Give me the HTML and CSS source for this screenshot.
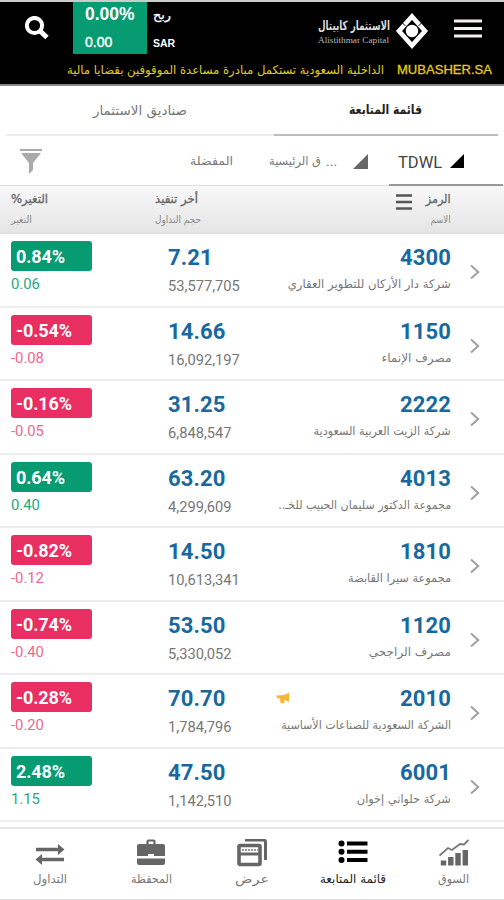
FILE: index.html
```html
<!DOCTYPE html>
<html lang="ar">
<head>
<meta charset="utf-8">
<title>قائمة المتابعة</title>
<link rel="stylesheet" href="styles.css">
</head>
<body>
<header class="top">
  <div class="bar">
    <svg class="search" width="24" height="24" viewBox="0 0 24 24"><circle cx="9.500" cy="9.500" r="7.600" fill="none" stroke="#fff" stroke-width="4"/><path d="M15 15l7 6.500" stroke="#fff" stroke-width="5"/></svg>
    <div class="gain"><b>0.00%</b><span>0.00</span></div>
    <div class="unit"><span class="ar">ربح</span><b>SAR</b></div>
    <div class="brand"><span class="ar">الاستثمار كابيتال</span><small>Alistithmar Capital</small></div>
    <svg class="logo" width="34" height="38" viewBox="0 0 34 38"><path d="M17 4.500l13 14.500L17 33.500 4 19z" fill="none" stroke="#fff" stroke-width="4.600"/><path d="M7 10.500l3.500 3.500M27 10.500l-3.500 3.500" stroke="#000" stroke-width="1"/><circle cx="17" cy="19" r="6.200" fill="#fff"/></svg>
    <svg class="burger" width="28" height="20" viewBox="0 0 28 20"><path d="M0 2h28M0 9.500h28M0 17h28" stroke="#f4eeee" stroke-width="3"/></svg>
  </div>
  <div class="ticker"><span class="ar news">الداخلية السعودية تستكمل مبادرة مساعدة الموقوفين بقضايا مالية</span><span class="src">MUBASHER.SA</span></div>
</header>
<nav class="tabs">
  <div class="tab"><span class="ar t1">صناديق الاستثمار</span></div>
  <div class="tab on"><span class="ar t2">قائمة المتابعة</span></div>
</nav>
<div class="filters">
  <svg class="funnel" width="22" height="25" viewBox="0 0 22 25"><path d="M0 1h22" stroke="#aaa" stroke-width="2"/><path d="M1 4h20l-8 10v7l-4 4V14z" fill="#aaa"/></svg>
  <span class="ar fav">المفضلة</span>
  <div class="market"><span class="ar" dir="rtl">ق الرئيسية</span><span class="dots">...</span><svg width="15" height="15" viewBox="0 0 15 15"><path d="M15 0v15H0z" fill="#666"/></svg></div>
  <div class="exch">TDWL<svg width="14" height="14" viewBox="0 0 14 14"><path d="M14 0v14H0z"/></svg></div>
</div>
<div class="head">
  <div class="hchange"><span class="ar h" dir="rtl">التغير%</span><span class="ar s">التغير</span></div>
  <div class="hprice"><span class="ar h">أخر تنفيذ</span><span class="ar s">حجم التداول</span></div>
  <svg class="sort" width="16" height="16" viewBox="0 0 16 16"><path d="M0 1.500h16M0 8h16M0 14.500h16" stroke="#555" stroke-width="2.600"/></svg>
  <div class="hname"><span class="ar h">الرمز</span><span class="ar s">الاسم</span></div>
</div>
<main id="list"></main>
<nav class="bottom">
  <div class="item"><svg width="30" height="28" viewBox="0 0 30 28"><path d="M1 10.500h23M6 20.500h23" stroke="#666" stroke-width="3.400"/><path d="M23 5l6.500 5.500-6.500 5.500zM7 15L.5 20.500 7 26z" fill="#666"/></svg><span class="ar">التداول</span></div>
  <div class="item"><svg width="30" height="28" viewBox="0 0 30 28"><path d="M11.500 6V2.500q0-1 1-1h5q1 0 1 1V6" fill="none" stroke="#666" stroke-width="2.200"/><path d="M3 5h24q2 0 2 2v10H18v-2h-6v2H1V7q0-2 2-2zM1 19.500h28V24q0 2-2 2H3q-2 0-2-2z" fill="#666"/></svg><span class="ar">المحفظة</span></div>
  <div class="item"><svg width="30" height="28" viewBox="0 0 30 28"><path d="M8 1h18.500q2 0 2 2v18" fill="none" stroke="#666" stroke-width="3"/><rect x="2" y="6.500" width="21" height="19" rx="1" fill="#fff" stroke="#666" stroke-width="3.600"/><path d="M2 15h21" stroke="#666" stroke-width="3"/><path d="M5 11h16" stroke="#999" stroke-width="2" stroke-dasharray="2 1"/></svg><span class="ar">عرض</span></div>
  <div class="item on"><svg width="30" height="28" viewBox="0 0 30 28"><path d="M9 4.500h20.500M9 12.800h20.500M9 21h20.500" stroke="#000" stroke-width="4"/><g><circle cx="3.500" cy="4.500" r="3"/><circle cx="3.500" cy="12.800" r="3"/><circle cx="3.500" cy="21" r="3"/></g></svg><span class="ar">قائمة المتابعة</span></div>
  <div class="item"><svg width="30" height="28" viewBox="0 0 30 28"><path d="M.5 16.500L9 9l4 2 8-6 4 .5 4.500-4.500" fill="none" stroke="#777" stroke-width="1.800"/><path d="M4.500 26.500v-5M11.800 26.500v-8.500M19 26.500V14M26.300 26.500V11" stroke="#666" stroke-width="5.400"/></svg><span class="ar">السوق</span></div>
</nav>
<script src="app.js"></script>
</body>
</html>
```

FILE: app.js
```
const rows = [
  ["0.84%", "0.06", "7.21", "53,577,705", "4300", "شركة دار الأركان للتطوير العقاري", 163],
  ["-0.54%", "-0.08", "14.66", "16,092,197", "1150", "مصرف الإنماء", 70],
  ["-0.16%", "-0.05", "31.25", "6,848,547", "2222", "شركة الزيت العربية السعودية", 137],
  ["0.64%", "0.40", "63.20", "4,299,609", "4013", "مجموعة الدكتور سليمان الحبيب للخـ..", 173],
  ["-0.82%", "-0.12", "14.50", "10,613,341", "1810", "مجموعة سيرا القابضة", 103],
  ["-0.74%", "-0.40", "53.50", "5,330,052", "1120", "مصرف الراجحي", 82],
  ["-0.28%", "-0.20", "70.70", "1,784,796", "2010", "الشركة السعودية للصناعات الأساسية", 170],
  ["2.48%", "1.15", "47.50", "1,142,510", "6001", "شركة حلواني إخوان", 94]
];
const horn = '<svg class="horn" width="14" height="12" viewBox="0 0 14 12"><path d="M13 .5V10L8.500 8l-.5 3.500L4.500 11l-.5-4L.5 5.500V3.500L8 3z" fill="#f6b737"/></svg>';
document.getElementById("list").innerHTML = rows.map(r => `
<section class="row ${r[0][0] === "-" ? "down" : "up"}">
  <div class="change"><b>${r[0]}</b><span>${r[1]}</span></div>
  <div class="price"><b>${r[2]}</b><span>${r[3]}</span></div>
  <div class="stock"><div class="code">${r[4] === "2010" ? horn : ""}<b>${r[4]}</b></div><span class="ar name" dir="rtl" data-w="${r[6]}">${r[5]}</span></div>
  <svg class="chev" width="10" height="16" viewBox="0 0 10 16"><path d="M1 1.500L8.200 8 1 14.500" fill="none" stroke="#a0a0a0" stroke-width="2"/></svg>
</section>`).join("");

const widths = [
  [".unit .ar", 18], [".brand .ar", 72], [".brand small", 71], [".news", 317], [".src", 95],
  [".t1", 94], [".t2", 73], [".fav", 43], [".market .ar", 52], [".hchange .h", 37], [".hchange .s", 21],
  [".hprice .h", 43], [".hprice .s", 46], [".hname .h", 25], [".hname .s", 20]
];
widths.forEach(([q, w]) => { document.querySelector(q).dataset.w = w; });
[34, 41, 34, 66, 31].forEach((w, i) => { document.querySelectorAll(".item .ar")[i].dataset.w = w; });
document.querySelectorAll("[data-w]").forEach(el => {
  const natural = el.getBoundingClientRect().width, want = +el.dataset.w;
  el.style.transform = `scaleX(${want / natural})`;
  const end = el.closest(".stock, .hname");
  el.style.transformOrigin = end ? "right" : "left";
  if (!end) el.style.marginRight = `${want - natural}px`;
});
```

FILE: styles.css
```css
* { box-sizing: border-box; }
body { margin: 0; width: 504px; height: 900px; overflow: hidden; background: #fff; font-family: Roboto, "DejaVu Sans", sans-serif; color: #777; }
svg { display: block; flex: none; }
span, b, small { display: block; width: max-content; white-space: nowrap; flex: none; }
.ar { font-family: "DejaVu Sans", sans-serif; }
.top { height: 86px; background: #000; border-top: 2px solid #ccc; border-bottom: 2px solid #888; color: #fff; }
.bar { height: 52px; display: flex; }
.search { margin: 14px 0 0 25px; }
.gain { width: 74px; height: 52px; margin-left: 24px; padding: 2px 0 0 12px; background: #079b72; font-family: "Liberation Sans", sans-serif; }
.gain b { font-size: 17.500px; line-height: 20px; }
.gain span { margin-top: 9px; font-size: 14px; line-height: 18px; -webkit-text-stroke: .4px #fff; }
.unit { width: 165px; padding: 4px 0 0 6px; font-family: "Liberation Sans", sans-serif; }
.unit .ar { font-size: 12px; line-height: 18px; -webkit-text-stroke: .3px #fff; }
.unit b { font-size: 10.500px; line-height: 12px; margin-top: 13px; }
.brand { width: 77px; padding: 15px 0 0 6px; font-family: "Liberation Serif", serif; }
.brand .ar { font-size: 13px; line-height: 18px; font-weight: bold; color: #ddd; }
.brand small { font-size: 9px; line-height: 12px; color: #bbb; margin-top: -1px; }
.logo { margin: 10px 0 0 6px; }
.burger { margin: 17px 0 0 25px; }
.ticker { height: 30px; display: flex; align-items: center; padding: 2px 0 0 67px; color: #e3cb1c; }
.ticker .ar { font-size: 12px; line-height: 20px; }
.ticker .src { font: 13px/20px "Liberation Sans", sans-serif; margin-left: 13px; -webkit-text-stroke: .3px; }
.tabs { height: 50px; display: flex; padding: 0 6px; }
.tab { flex: 0 0 268px; padding: 13px 0 0 87px; border-bottom: 2px solid #eee; }
.tab.on { flex-basis: 224px; padding: 12px 0 0 75px; border-color: #bdbdbd; color: #222; }
.tab .ar { font-size: 13px; line-height: 24px; }
.tab.on .ar { font-weight: bold; }
.filters { height: 50px; display: flex; align-items: center; border-bottom: 1px solid #ddd; }
.funnel { margin: 2px 0 0 20px; }
.fav { margin-left: 148px; font-size: 12px; }
.market { display: flex; align-items: center; margin-left: 36px; font-size: 12px; width: 120px; }
.dots { font-size: 14px; margin-left: 5px; width: 12px; }
.market svg { margin: 2px 0 0 15px; }
.exch { height: 50px; width: 114px; display: flex; align-items: center; padding: 5px 0 0 9px; color: #444; font-size: 16.500px; border-bottom: 2px solid #999; }
.exch svg { margin: -3px 0 0 8px; }
.head { height: 48px; display: flex; background: linear-gradient(#f8f8f8, #e5e5e5); border-bottom: 1px solid #ddd; padding: 5px 53px 0 11px; }
.head .h { font-size: 12px; line-height: 17px; color: #666; -webkit-text-stroke: .3px; }
.head .s { font-size: 10px; line-height: 14px; margin-top: 5px; color: #888; }
.hchange { width: 144px; }
.hprice { width: 241px; }
.sort { margin-top: 3px; }
.hname { flex: 1; display: flex; flex-direction: column; align-items: flex-end; min-width: 0; }
.row { height: 73.500px; display: grid; grid-template-columns: 157px 103px 180px 1fr; padding: 7px 0 0 11px; border-bottom: 2px solid #eee; }
.change b { width: 81px; height: 30px; padding-left: 5px; border-radius: 3px; font-size: 18px; line-height: 31px; letter-spacing: -.1px; color: #fff; background: #079b72; }
.change span { font-size: 14.800px; line-height: 18px; margin-top: 4px; color: #25a881; }
.down .change b { background: #e92e62; }
.down .change span { color: #ee6890; }
.price b, .code b { font-size: 22px; line-height: 26px; letter-spacing: .1px; color: #17699f; }
.price b, .code { margin-top: 4px; }
.price span { font-size: 14.700px; line-height: 18px; margin-top: 6px; }
.stock { display: flex; flex-direction: column; align-items: flex-end; }
.code { width: 175px; display: flex; justify-content: flex-end; }
.horn { margin: 6px auto 0 0; }
.name { font-size: 12px; line-height: 20px; margin-top: 3px; }
.chev { margin: 23px 0 0 19px; }
.bottom { height: 73px; margin-top: 5px; border-top: 2px solid #e8e8e8; border-bottom: 1px solid #ddd; display: flex; }
.item { width: 101px; padding-top: 10px; display: flex; flex-direction: column; align-items: center; }
.item .ar { font-size: 12px; line-height: 20px; margin-top: 2px; }
.item.on { color: #222; }
```
